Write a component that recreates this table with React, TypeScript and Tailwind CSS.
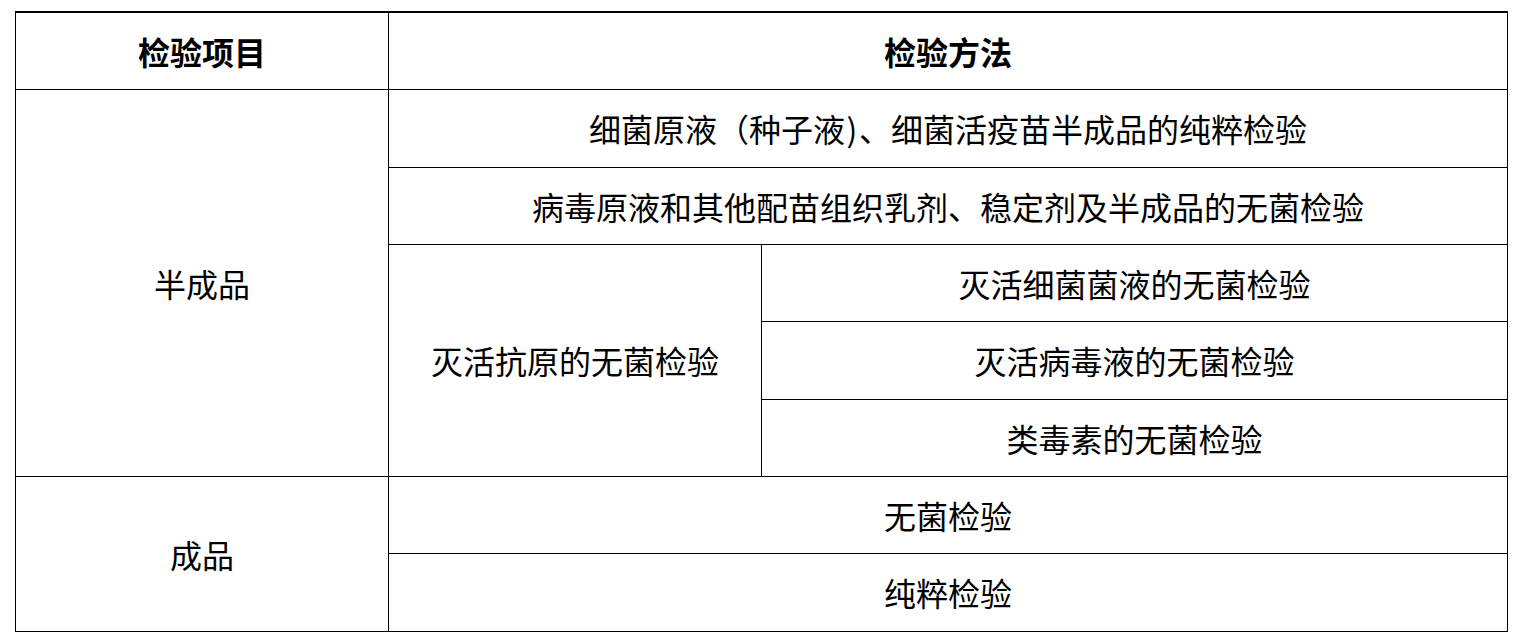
export default function App() {
  const td = "border border-black text-center align-middle p-0";
  return (
    <div className="w-[1522px] h-[641px] bg-white" style={{ fontFamily: '"Noto Sans CJK SC", "Noto Sans", sans-serif' }}>
      <div className="pt-[11px] pl-[15px]">
        <table className="border-collapse w-[1492px] table-fixed text-[32px] leading-none text-black border-t-2 border-black">
          <colgroup>
            <col className="w-[373px]" />
            <col className="w-[373px]" />
            <col className="w-[746px]" />
          </colgroup>
          <tbody>
            <tr className="h-[77px]">
              <td className={td + " font-bold border-t-2"}>检验项目</td>
              <td className={td + " font-bold border-t-2"} colSpan={2}>检验方法</td>
            </tr>
            <tr className="h-[78px]">
              <td className={td} rowSpan={5}>半成品</td>
              <td className={td} colSpan={2}>
                细菌原液（种子液<span className="inline-block w-[14px] text-center">)</span>、细菌活疫苗半成品的纯粹检验
              </td>
            </tr>
            <tr className="h-[77px]">
              <td className={td} colSpan={2}>病毒原液和其他配苗组织乳剂、稳定剂及半成品的无菌检验</td>
            </tr>
            <tr className="h-[77px]">
              <td className={td} rowSpan={3}>灭活抗原的无菌检验</td>
              <td className={td}>灭活细菌菌液的无菌检验</td>
            </tr>
            <tr className="h-[78px]">
              <td className={td}>灭活病毒液的无菌检验</td>
            </tr>
            <tr className="h-[77px]">
              <td className={td}>类毒素的无菌检验</td>
            </tr>
            <tr className="h-[77px]">
              <td className={td} rowSpan={2}>成品</td>
              <td className={td} colSpan={2}>无菌检验</td>
            </tr>
            <tr className="h-[78px]">
              <td className={td} colSpan={2}>纯粹检验</td>
            </tr>
          </tbody>
        </table>
      </div>
    </div>
  );
}
